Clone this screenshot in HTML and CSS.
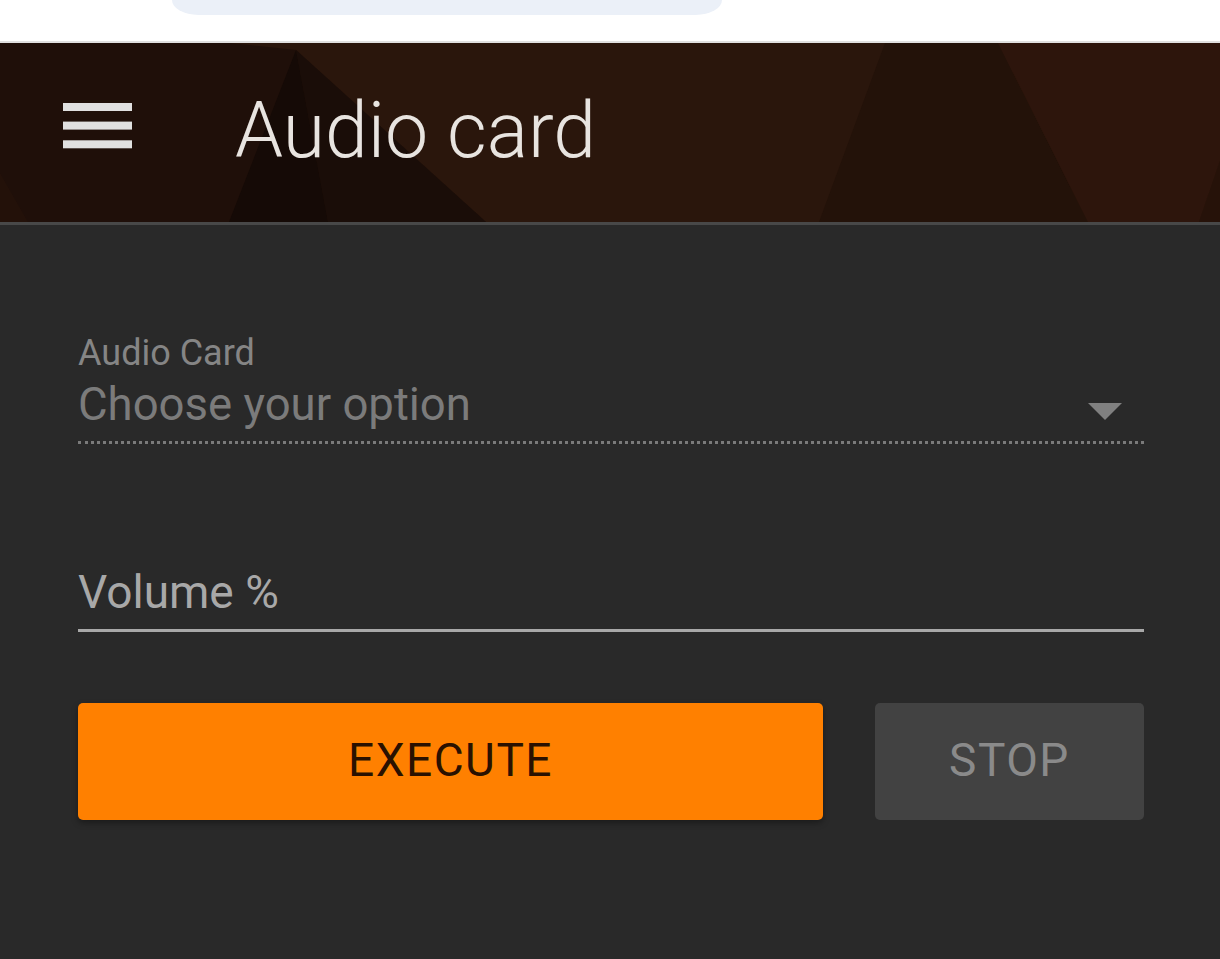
FILE: index.html
```html
<!DOCTYPE html>
<html lang="en">
<head>
<meta charset="utf-8">
<title>Audio card</title>
<link rel="stylesheet" href="styles.css">
</head>
<body>
  <div class="topbar">
    <div class="pill"></div>
  </div>
  <header class="header">
    <svg class="header-bg" viewBox="0 0 1220 179" preserveAspectRatio="none" aria-hidden="true">
      <rect x="0" y="0" width="1220" height="179" fill="#1f0f09"/>
      <polygon points="0,130 0,179 28,179" fill="#231109"/>
      <polygon points="230,0 1220,0 1220,179 486,179 296,7" fill="#2a160c"/>
      <polygon points="296,7 229,179 328,179" fill="#150a06"/>
      <polygon points="296,7 328,179 486,179" fill="#1a0d08"/>
      <polygon points="885,0 998,0 1088,179 819,179" fill="#231209"/>
      <polygon points="998,0 1220,0 1220,118 1199,179 1088,179" fill="#2d150c"/>
      <polygon points="1220,118 1220,179 1199,179" fill="#261209"/>
    </svg>
    <button class="menu-btn" aria-label="Menu">
      <svg width="69" height="46" viewBox="0 0 69 46">
        <rect x="0" y="0" width="69" height="8" fill="#e0e0e0"/>
        <rect x="0" y="18.6" width="69" height="8" fill="#e0e0e0"/>
        <rect x="0" y="37.3" width="69" height="8" fill="#e0e0e0"/>
      </svg>
    </button>
    <h1 class="title">Audio card</h1>
  </header>
  <main class="content">
    <div class="field select-field">
      <label class="select-label">Audio Card</label>
      <div class="select-row">
        <span class="select-value">Choose your option</span>
        <svg class="caret" width="34" height="17" viewBox="0 0 34 17"><polygon points="0,0 34,0 17,17" fill="#808080"/></svg>
      </div>
    </div>
    <div class="field input-field">
      <span class="input-label">Volume %</span>
    </div>
    <div class="actions">
      <button class="btn btn-execute">EXECUTE</button>
      <button class="btn btn-stop">STOP</button>
    </div>
  </main>
</body>
</html>
```

FILE: styles.css
```css
html, body {
  margin: 0;
  padding: 0;
}
body {
  background: #292929;
  font-family: Roboto, "Noto Sans", "Liberation Sans", sans-serif;
  min-height: 959px;
  overflow: hidden;
}
.topbar {
  height: 41px;
  background: #ffffff;
  border-bottom: 2px solid #e0e0e0;
  overflow: hidden;
}
.pill {
  margin-left: 172px;
  width: 550px;
  height: 15px;
  background: #ebf0f8;
  border-radius: 0 0 42px 42px / 0 0 24px 24px;
}
.header {
  position: relative;
  border-bottom: 3px solid #484848;
  display: flex;
  align-items: flex-start;
  padding-top: 43px;
  box-sizing: border-box;
  height: 182px;
  overflow: hidden;
}
.header-bg {
  position: absolute;
  left: 0;
  top: 0;
  width: 100%;
  height: 179px;
  z-index: 0;
}
.menu-btn {
  position: relative;
  z-index: 1;
  margin: 17px 0 0 63px;
  padding: 0;
  border: 0;
  background: none;
  width: 69px;
  height: 46px;
  display: block;
}
.menu-btn svg {
  display: block;
}
.title {
  position: relative;
  z-index: 1;
  margin: 0 0 0 103px;
  font-size: 77px;
  line-height: 90px;
  font-weight: 300;
  color: #e8e4e0;
}
.content {
  padding: 108px 76px 0 78px;
}
.field {
  display: flex;
  flex-direction: column;
}
.select-label {
  font-size: 36px;
  line-height: 40px;
  color: #858585;
}
.select-row {
  margin-top: 7px;
  display: flex;
  align-items: center;
  justify-content: space-between;
  padding-bottom: 11px;
  border-bottom: 3px dotted #7a7a7a;
}
.select-value {
  font-size: 45.5px;
  line-height: 50px;
  color: #7b7b7b;
}
.caret {
  margin: 12px 22px 0 0;
  display: block;
}
.input-field {
  margin-top: 121px;
  padding-bottom: 10px;
  border-bottom: 3px solid #a8a8a8;
}
.input-label {
  font-size: 46px;
  line-height: 54px;
  color: #a8a8a8;
}
.actions {
  margin-top: 71px;
  display: flex;
  gap: 52px;
}
.btn {
  height: 117px;
  border: 0;
  border-radius: 5px;
  font-family: Roboto, "Noto Sans", "Liberation Sans", sans-serif;
  font-size: 46px;
  letter-spacing: 1.5px;
  display: flex;
  align-items: center;
  justify-content: center;
  padding: 0 0 4px 0;
  box-sizing: border-box;
}
.btn-execute {
  flex: 1;
  background: #ff8000;
  color: #2a1100;
  box-shadow: 0 3px 6px rgba(0, 0, 0, 0.35);
}
.btn-stop {
  width: 269px;
  background: #424242;
  color: #8a8a8a;
}
```
